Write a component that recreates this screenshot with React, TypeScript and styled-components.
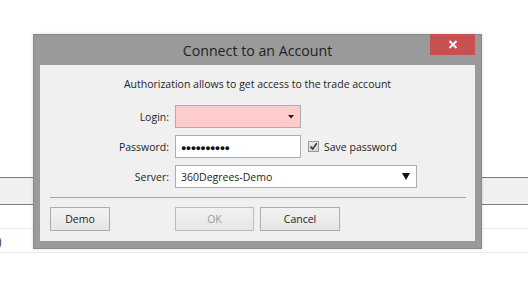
import React from 'react'
import styled, { createGlobalStyle } from 'styled-components'

const Global = createGlobalStyle`
  html, body {
    margin: 0;
    padding: 0;
    background: #fff;
    font-family: "Open Sans", "Noto Sans", sans-serif;
  }
`

const Page = styled.div`
  position: relative;
  width: 528px;
  height: 287px;
  overflow: hidden;
  background: #fff;
`
const Backdrop = styled.div`
  display: flex;
  flex-direction: column;
  padding-top: 177px;
`
const HeaderRow = styled.div`
  height: 26px;
  background: #f0f0f0;
  border-top: 1px solid #7a7a7a;
  border-bottom: 1px solid #7a7a7a;
`
const Row = styled.div`
  height: 23px;
  border-bottom: 1px solid #ececec;
  font-size: 12px;
  color: #333;
  display: flex;
  align-items: flex-end;
`
const RowText = styled.span`
  margin-left: -2px;
  line-height: 20px;
`

const Dialog = styled.div`
  position: absolute;
  left: 33px;
  top: 34px;
  width: 449px;
  height: 215px;
  background: #9a9a9a;
  box-sizing: border-box;
  border: 1px solid #8a8a8a;
  display: flex;
  flex-direction: column;
  box-shadow: 0 0 3px rgba(0, 0, 0, 0.15);
`
const TitleBar = styled.div`
  position: relative;
  height: 30px;
  display: flex;
  align-items: center;
  justify-content: center;
  font-size: 14.2px;
  color: #222;
`
const CloseBtn = styled.div`
  position: absolute;
  right: 6px;
  top: -1px;
  width: 45px;
  height: 21px;
  background: #c75050;
  display: flex;
  align-items: center;
  justify-content: center;
`
const Body = styled.div`
  flex: 1;
  margin: 0 6px 7px 6px;
  background: #f0f0f0;
  display: flex;
  flex-direction: column;
  font-size: 10.5px;
  color: #1e1e1e;
`
const Intro = styled.div`
  text-align: center;
  margin-top: 11px;
  height: 16px;
  line-height: 16px;
`
const Form = styled.div`
  display: grid;
  grid-template-columns: 129px auto;
  column-gap: 6px;
  row-gap: 7px;
  margin-top: 13px;
  align-items: center;
`
const Label = styled.label`
  text-align: right;
`
const Field = styled.div<{ $w: number; $bg?: string }>`
  box-sizing: border-box;
  width: ${p => p.$w}px;
  height: 23px;
  background: ${p => p.$bg || '#fff'};
  border: 1px solid #abadb3;
  display: flex;
  align-items: center;
  padding: 0 6px 0 5px;
  justify-content: space-between;
`
const Inline = styled.div`
  display: flex;
  align-items: center;
  gap: 6px;
`
const Dots = styled.span`
  font-size: 9px;
  letter-spacing: -0.6px;
  color: #111;
  margin-top: 1px;
`
const Check = styled.span`
  box-sizing: border-box;
  width: 11px;
  height: 11px;
  border: 1px solid #9a9a9a;
  background: linear-gradient(#e8e8e8, #d4d4d4);
  display: flex;
  align-items: center;
  justify-content: center;
  margin-left: 1px;
`
const CheckText = styled.span`
  margin-left: -1px;
`
const Separator = styled.div`
  height: 1px;
  background: #a8a8a8;
  margin: 9px 9px 0 10px;
`
const Buttons = styled.div`
  display: flex;
  padding: 9px 0 0 10px;
`
const Button = styled.div<{ $w: number; $off?: boolean; $ml?: number }>`
  box-sizing: border-box;
  width: ${p => p.$w}px;
  height: 24px;
  margin-left: ${p => p.$ml || 0}px;
  border: 1px solid ${p => (p.$off ? '#bcbcbc' : '#acacac')};
  background: linear-gradient(#f2f2f2, #e6e6e6);
  color: ${p => (p.$off ? '#9a9a9a' : '#1e1e1e')};
  display: flex;
  align-items: center;
  justify-content: center;
`

export default function App() {
  return (
    <Page>
      <Global />
      <Backdrop>
        <HeaderRow />
        <Row />
        <Row>
          <RowText>)</RowText>
        </Row>
      </Backdrop>
      <Dialog>
        <TitleBar>
          Connect to an Account
          <CloseBtn>
            <svg width="10" height="9" viewBox="0 0 10 9">
              <path d="M1.5 1 L8.5 8 M8.5 1 L1.5 8" stroke="#fff" strokeWidth="1.8" />
            </svg>
          </CloseBtn>
        </TitleBar>
        <Body>
          <Intro>Authorization allows to get access to the trade account</Intro>
          <Form>
            <Label>Login:</Label>
            <Field $w={126} $bg="#ffcccc">
              <span />
              <svg width="6" height="4" viewBox="0 0 6 4">
                <path d="M0 0 H6 L3 3.5 Z" fill="#222" />
              </svg>
            </Field>
            <Label>Password:</Label>
            <Inline>
              <Field $w={126}>
                <Dots>●●●●●●●●●●</Dots>
              </Field>
              <Check>
                <svg width="9" height="9" viewBox="0 0 9 9">
                  <path d="M1.5 4.5 L3.6 7 L7.8 1.2" stroke="#3a3a3a" strokeWidth="1.6" fill="none" />
                </svg>
              </Check>
              <CheckText>Save password</CheckText>
            </Inline>
            <Label>Server:</Label>
            <Field $w={242}>
              <span>360Degrees-Demo</span>
              <svg width="8" height="7" viewBox="0 0 8 7">
                <path d="M0 0 H8 L4 7 Z" fill="#111" />
              </svg>
            </Field>
          </Form>
          <Separator />
          <Buttons>
            <Button $w={60}>Demo</Button>
            <Button $w={79} $off $ml={65}>OK</Button>
            <Button $w={80} $ml={6}>Cancel</Button>
          </Buttons>
        </Body>
      </Dialog>
    </Page>
  )
}
